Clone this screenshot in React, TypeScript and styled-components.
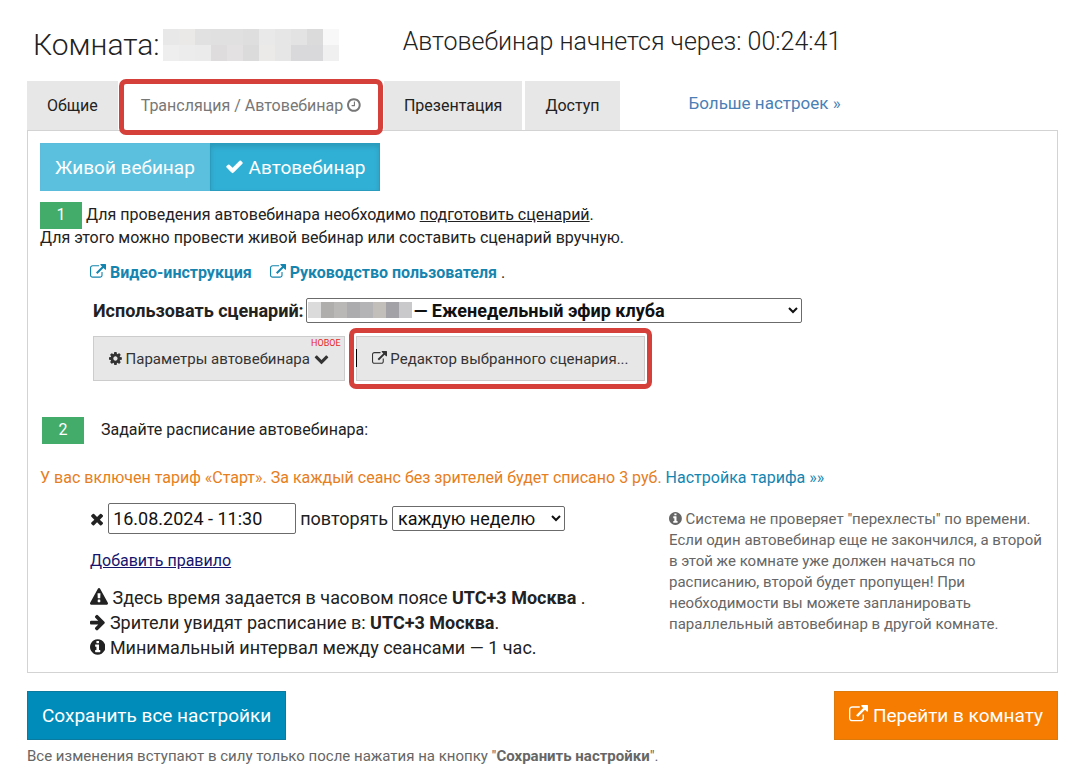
import React from "react";
import styled, { createGlobalStyle } from "styled-components";

const GlobalStyle = createGlobalStyle`
  *, *::before, *::after { box-sizing: border-box; }
  body {
    margin: 0;
    background: #fff;
    color: #222;
    font-family: Roboto, "Liberation Sans", sans-serif;
    font-size: 16px;
    line-height: 24px;
  }
  button, input, select { font-family: inherit; }
`;

/* ---------- icons ---------- */

const glyphs = {
  clock: {
    x: 128,
    w: 1536,
    d: "M1024 544v448q0 14-9 23t-23 9h-320q-14 0-23-9t-9-23v-64q0-14 9-23t23-9h224v-352q0-14 9-23t23-9h64q14 0 23 9t9 23zm416 352q0-148-73-273t-198-198-273-73-273 73-198 198-73 273 73 273 198 198 273 73 273-73 198-198 73-273zm224 0q0 209-103 385.5t-279.5 279.5-385.5 103-385.5-103-279.5-279.5-103-385.5 103-385.5 279.5-279.5 385.5-103 385.5 103 279.5 279.5 103 385.5z",
  },
  check: {
    x: 0,
    w: 1792,
    d: "M1671 566q0 40-28 68l-724 724-136 136q-28 28-68 28t-68-28l-136-136-362-362q-28-28-28-68t28-68l136-136q28-28 68-28t68 28l294 295 656-657q28-28 68-28t68 28l136 136q28 28 28 68z",
  },
  external: {
    x: 0,
    w: 1792,
    d: "M1408 928v320q0 119-84.5 203.5t-203.5 84.5h-832q-119 0-203.5-84.5t-84.5-203.5v-832q0-119 84.5-203.5t203.5-84.5h704q14 0 23 9t9 23v64q0 14-9 23t-23 9h-704q-66 0-113 47t-47 113v832q0 66 47 113t113 47h832q66 0 113-47t47-113v-320q0-14 9-23t23-9h64q14 0 23 9t9 23zm384-864v512q0 26-19 45t-45 19-45-19l-176-176-652 652q-10 10-23 10t-23-10l-114-114q-10-10-10-23t10-23l652-652-176-176q-19-19-19-45t19-45 45-19h512q26 0 45 19t19 45z",
  },
  cog: {
    x: 128,
    w: 1536,
    d: "M1152 896q0-106-75-181t-181-75-181 75-75 181 75 181 181 75 181-75 75-181zm512-109v222q0 12-8 23t-20 13l-185 28q-19 54-39 91 35 50 107 138 10 12 10 25t-9 23q-27 37-99 108t-94 71q-12 0-26-9l-138-108q-44 23-91 38-16 136-29 186-7 28-36 28h-222q-14 0-24.5-8.5t-11.5-21.5l-28-184q-49-16-90-37l-141 107q-10 9-25 9-14 0-25-11-126-114-165-168-7-10-7-23 0-12 8-23 15-21 51-66.5t54-70.5q-27-50-41-99l-183-27q-13-2-21-12.5t-8-23.5v-222q0-12 8-23t19-13l186-28q14-46 39-92-40-57-107-138-10-12-10-24 0-10 9-23 26-36 98.5-107.5t94.5-71.5q13 0 26 10l138 107q44-23 91-38 16-136 29-186 7-28 36-28h222q14 0 24.5 8.5t11.5 21.5l28 184q49 16 90 37l142-107q9-9 24-9 13 0 25 10 129 119 165 170 7 8 7 22 0 12-8 23-15 21-51 66.5t-54 70.5q26 50 41 98l183 28q13 2 21 12.5t8 23.5z",
  },
  chevron: {
    x: 0,
    w: 1792,
    d: "M1683 808l-742 741q-19 19-45 19t-45-19l-742-741q-19-19-19-45.5t19-45.5l166-165q19-19 45-19t45 19l531 531 531-531q19-19 45-19t45 19l166 165q19 19 19 45.5t-19 45.5z",
  },
  times: {
    x: 192,
    w: 1408,
    d: "M1490 1322q0 40-28 68l-136 136q-28 28-68 28t-68-28l-294-294-294 294q-28 28-68 28t-68-28l-136-136q-28-28-28-68t28-68l294-294-294-294q-28-28-28-68t28-68l136-136q28-28 68-28t68 28l294 294 294-294q28-28 68-28t68 28l136 136q28 28 28 68t-28 68l-294 294 294 294q28 28 28 68z",
  },
  warning: {
    x: 0,
    w: 1792,
    d: "M1024 1375v-190q0-14-9.5-23.5t-22.5-9.5h-192q-13 0-22.5 9.5t-9.5 23.5v190q0 14 9.5 23.5t22.5 9.5h192q13 0 22.5-9.5t9.5-23.5zm-2-374l18-459q0-12-10-19-13-11-24-11h-220q-11 0-24 11-10 7-10 21l17 457q0 10 10 16.5t24 6.5h185q14 0 23.5-6.5t10.5-16.5zm-14-934l768 1408q35 63-2 126-17 29-46.5 46t-63.5 17h-1536q-34 0-63.5-17t-46.5-46q-37-63-2-126l768-1408q17-31 47-49t65-18 65 18 47 49z",
  },
  arrow: {
    x: 128,
    w: 1536,
    d: "M1600 960q0 54-37 91l-651 651q-39 37-91 37-51 0-90-37l-75-75q-38-38-38-91t38-91l293-293h-704q-52 0-84.5-37.5t-32.5-90.5v-128q0-53 32.5-90.5t84.5-37.5h704l-293-294q-38-36-38-90t38-90l75-75q38-38 90-38 53 0 91 38l651 651q37 35 37 90z",
  },
  info: {
    x: 128,
    w: 1536,
    d: "M1152 1376v-160q0-14-9-23t-23-9h-96v-512q0-14-9-23t-23-9h-320q-14 0-23 9t-9 23v160q0 14 9 23t23 9h96v320h-96q-14 0-23 9t-9 23v160q0 14 9 23t23 9h448q14 0 23-9t9-23zm-128-896v-160q0-14-9-23t-23-9h-192q-14 0-23 9t-9 23v160q0 14 9 23t23 9h192q14 0 23-9t9-23zm640 416q0 209-103 385.5t-279.5 279.5-385.5 103-385.5-103-279.5-279.5-103-385.5 103-385.5 279.5-279.5 385.5-103 385.5 103 279.5 279.5 103 385.5z",
  },
};

const Glyph = styled.svg`
  height: 1em;
  fill: currentColor;
  vertical-align: -2px;
`;

function Icon({ name }: { name: keyof typeof glyphs }) {
  const g = glyphs[name];
  return (
    <Glyph viewBox={`${g.x} 0 ${g.w} 1792`} aria-hidden="true">
      <path d={g.d} />
    </Glyph>
  );
}

/* ---------- shared parts ---------- */

const MosaicGrid = styled.span<{ $cols: number; $cell: number }>`
  display: inline-grid;
  grid-template-columns: repeat(${(p) => p.$cols}, ${(p) => p.$cell}px);
  grid-auto-rows: 16px;
`;

const MosaicCell = styled.span<{ $tone: string }>`
  background: ${(p) => p.$tone};
`;

function Mosaic({ cols, cell, tones }: { cols: number; cell: number; tones: string[] }) {
  return (
    <MosaicGrid $cols={cols} $cell={cell} aria-hidden="true">
      {tones.map((t, i) => (
        <MosaicCell key={i} $tone={t} />
      ))}
    </MosaicGrid>
  );
}

const roomTones = [
  "#e9e8e9", "#ebe9e8", "#e2e1e2", "#e1e0e1", "#e1e0e1", "#dfdedf", "#e9e9ea", "#e6e6e6", "#e4e3e4", "#dcdbdc", "#f8f8f8",
  "#eeeeee", "#ececec", "#ebebeb", "#dedcdd", "#e3e1e2", "#dcdbdc", "#ebeae8", "#e6e6e7", "#d9d9db", "#d9d9db", "#f0f0f0",
];

const scenarioTones = ["#dcdbdc", "#b0adad", "#bab8b7", "#acacaf", "#b4b4b7", "#c2bfba", "#a3a2a7", "#c9c9cb"];

const Marker = styled.span<{ $gap: string }>`
  position: absolute;
  inset: ${(p) => p.$gap};
  border: 5px solid #d6403b;
  border-radius: 7px;
  pointer-events: none;
  z-index: 1;
`;

/* ---------- page ---------- */

const Page = styled.main`
  padding: 26px 32px 8px 27px;
`;

const Header = styled.header`
  display: flex;
  gap: 64px;
  height: 55px;
  padding-left: 6px;
`;

const Title = styled.h1`
  display: flex;
  align-items: center;
  gap: 3px;
  height: 38px;
  margin: 0;
  font-size: 30px;
  font-weight: 300;
`;

const Countdown = styled.div`
  height: 32px;
  line-height: 32px;
  font-size: 25px;
  font-weight: 300;
`;

const Tabs = styled.nav`
  display: flex;
  gap: 3px;
`;

const Tab = styled.button<{ $active?: boolean }>`
  position: relative;
  height: 49px;
  padding: 0 20px;
  border: 0;
  background: ${(p) => (p.$active ? "#fff" : "#e7e7e7")};
  color: ${(p) => (p.$active ? "#777" : "#222")};
  font-size: 16px;
`;

const MoreLink = styled.a`
  margin-left: 66px;
  padding-top: 10px;
  color: #4a80b5;
  font-size: 17px;
  text-decoration: none;
`;

const Panel = styled.section`
  border: 1px solid #d3d3d3;
  padding: 12px;
`;

const ModeSwitch = styled.div`
  display: flex;
`;

const ModeButton = styled.button<{ $active?: boolean }>`
  height: 48px;
  padding: 0 14px;
  border: 1px solid ${(p) => (p.$active ? "#2a9dbf" : "#5bbcdb")};
  background: ${(p) => (p.$active ? "#31b0d5" : "#5bc0de")};
  box-shadow: ${(p) => (p.$active ? "inset 0 3px 5px rgba(0, 0, 0, 0.125)" : "none")};
  color: #fff;
  font-size: 19px;
`;

const Intro = styled.p`
  margin: 12px 0 0;
  line-height: 23px;
`;

const Step = styled.span`
  display: inline-block;
  width: 42px;
  height: 27px;
  margin: -4px 4px -4px 0;
  background: #43ac6a;
  color: #fff;
  text-align: center;
  line-height: 25px;
  vertical-align: middle;
`;

const PlainLink = styled.a`
  color: inherit;
`;

const GuideLinks = styled.p`
  display: flex;
  gap: 18px;
  margin: 12px 0 0 50px;
`;

const GuideLink = styled.a`
  color: #1585b0;
  font-weight: 700;
  text-decoration: none;
`;

const ScenarioRow = styled.div`
  display: flex;
  align-items: center;
  gap: 2px;
  margin: 13px 0 0 53px;
  font-size: 18px;
  font-weight: 700;
`;

const SelectWrap = styled.span`
  position: relative;
  display: flex;
  flex: 0 1 496px;
`;

const SelectCover = styled.span`
  position: absolute;
  left: 2px;
  top: 4px;
  display: flex;
  pointer-events: none;
`;

const Select = styled.select<{ $wide?: boolean }>`
  width: ${(p) => (p.$wide ? "100%" : "173px")};
  height: 25px;
  padding: 0 0 0 ${(p) => (p.$wide ? "103px" : "1px")};
  border: 1px solid #6b6b6b;
  border-radius: 2px;
  background: #fff;
  color: #111;
  font-size: 18px;
  font-weight: inherit;
`;

const ToolRow = styled.div`
  display: flex;
  gap: 11px;
  margin: 13px 0 0 53px;
`;

const ToolButton = styled.button`
  position: relative;
  height: 45px;
  padding: 0 15px;
  border: 1px solid #ccc;
  background: #e7e7e7;
  color: #333;
  font-size: 15px;
`;

const Caret = styled.span`
  position: absolute;
  left: -1px;
  top: 12px;
  width: 1px;
  height: 18px;
  background: #000;
`;

const NewBadge = styled.span`
  position: absolute;
  top: 0;
  right: 3px;
  color: #e8262b;
  font-size: 9px;
  line-height: 12px;
`;

const StepRow = styled.div`
  display: flex;
  align-items: center;
  gap: 13px;
  margin: 37px 0 0 2px;
`;

const TariffNote = styled.p`
  margin: 24px 0 0;
  color: #e67e22;
`;

const TariffLink = styled.a`
  color: #1585b0;
  text-decoration: none;
`;

const Schedule = styled.div`
  display: flex;
  justify-content: space-between;
  margin: 13px 0 0 50px;
  font-size: 18px;
`;

const RuleRow = styled.div`
  display: flex;
  align-items: center;
  gap: 4px;
`;

const RemoveButton = styled.button`
  display: flex;
  padding: 0;
  border: 0;
  background: none;
  color: #222;
  font-size: 18px;
`;

const DateInput = styled.input`
  width: 188px;
  height: 31px;
  padding: 0 4px;
  border: 1px solid #6b6b6b;
  border-radius: 2px;
  color: #111;
  font-size: 18px;
`;

const AddRule = styled.a`
  display: block;
  margin-top: 15px;
  color: #15156e;
  font-size: 16px;
`;

const Notes = styled.div`
  margin-top: 12px;
`;

const Note = styled.div`
  line-height: 25px;
`;

const Aside = styled.aside`
  flex: 0 0 376px;
  padding-top: 6px;
  color: #666;
  font-size: 15px;
  line-height: 21px;
`;

const Footer = styled.footer`
  display: flex;
  justify-content: space-between;
  margin-top: 18px;
`;

const ActionButton = styled.button<{ $tone: string; $edge: string }>`
  height: 49px;
  padding: 0 14px;
  border: 1px solid ${(p) => p.$edge};
  background: ${(p) => p.$tone};
  color: #fff;
  font-size: 19px;
`;

const FootNote = styled.p`
  margin: 4px 0 0;
  color: #666;
  font-size: 15px;
`;

export default function App() {
  return (
    <>
      <GlobalStyle />
      <Page>
        <Header>
          <Title>
            Комната:
            <Mosaic cols={11} cell={16} tones={roomTones} />
          </Title>
          <Countdown>Автовебинар начнется через: 00:24:41</Countdown>
        </Header>

        <Tabs>
          <Tab>Общие</Tab>
          <Tab $active>
            Трансляция / Автовебинар <Icon name="clock" />
            <Marker $gap="-2px -2px -5px" />
          </Tab>
          <Tab>Презентация</Tab>
          <Tab>Доступ</Tab>
          <MoreLink href="#more">Больше настроек »</MoreLink>
        </Tabs>

        <Panel>
          <ModeSwitch>
            <ModeButton>Живой вебинар</ModeButton>
            <ModeButton $active>
              <Icon name="check" /> Автовебинар
            </ModeButton>
          </ModeSwitch>

          <Intro>
            <Step>1</Step>
            Для проведения автовебинара необходимо <PlainLink href="#prepare">подготовить сценарий</PlainLink>.
            <br />
            Для этого можно провести живой вебинар или составить сценарий вручную.
          </Intro>

          <GuideLinks>
            <GuideLink href="#video">
              <Icon name="external" /> Видео-инструкция
            </GuideLink>
            <span>
              <GuideLink href="#guide">
                <Icon name="external" /> Руководство пользователя
              </GuideLink>{" "}
              .
            </span>
          </GuideLinks>

          <ScenarioRow>
            <label htmlFor="scenario">Использовать сценарий:</label>
            <SelectWrap>
              <Select id="scenario" $wide>
                <option>— Еженедельный эфир клуба</option>
              </Select>
              <SelectCover>
                <Mosaic cols={8} cell={13} tones={scenarioTones} />
              </SelectCover>
            </SelectWrap>
          </ScenarioRow>

          <ToolRow>
            <ToolButton>
              <Icon name="cog" /> Параметры автовебинара <Icon name="chevron" />
              <NewBadge>НОВОЕ</NewBadge>
            </ToolButton>
            <ToolButton>
              <Caret />
              <Icon name="external" /> Редактор выбранного сценария...
              <Marker $gap="-9px -8px" />
            </ToolButton>
          </ToolRow>

          <StepRow>
            <Step>2</Step>
            <span>Задайте расписание автовебинара:</span>
          </StepRow>

          <TariffNote>
            У вас включен тариф «Старт». За каждый сеанс без зрителей будет списано 3 руб.{" "}
            <TariffLink href="#tariff">Настройка тарифа »»</TariffLink>
          </TariffNote>

          <Schedule>
            <div>
              <RuleRow>
                <RemoveButton aria-label="Удалить правило">
                  <Icon name="times" />
                </RemoveButton>
                <DateInput aria-label="Дата и время" defaultValue="16.08.2024 - 11:30" />
                <label htmlFor="repeat">повторять</label>
                <Select id="repeat">
                  <option>каждую неделю</option>
                </Select>
              </RuleRow>
              <AddRule href="#add">Добавить правило</AddRule>
              <Notes>
                <Note>
                  <Icon name="warning" /> Здесь время задается в часовом поясе <b>UTC+3 Москва</b> .
                </Note>
                <Note>
                  <Icon name="arrow" /> Зрители увидят расписание в: <b>UTC+3 Москва</b>.
                </Note>
                <Note>
                  <Icon name="info" /> Минимальный интервал между сеансами — 1 час.
                </Note>
              </Notes>
            </div>
            <Aside>
              <Icon name="info" /> Система не проверяет "перехлесты" по времени. Если один автовебинар еще не
              закончился, а второй в этой же комнате уже должен начаться по расписанию, второй будет пропущен! При
              необходимости вы можете запланировать параллельный автовебинар в другой комнате.
            </Aside>
          </Schedule>
        </Panel>

        <Footer>
          <ActionButton $tone="#008cba" $edge="#0a7b9e">
            Сохранить все настройки
          </ActionButton>
          <ActionButton $tone="#f57c00" $edge="#dd7a0c">
            <Icon name="external" /> Перейти в комнату
          </ActionButton>
        </Footer>
        <FootNote>
          Все изменения вступают в силу только после нажатия на кнопку "<b>Сохранить настройки</b>".
        </FootNote>
      </Page>
    </>
  );
}
